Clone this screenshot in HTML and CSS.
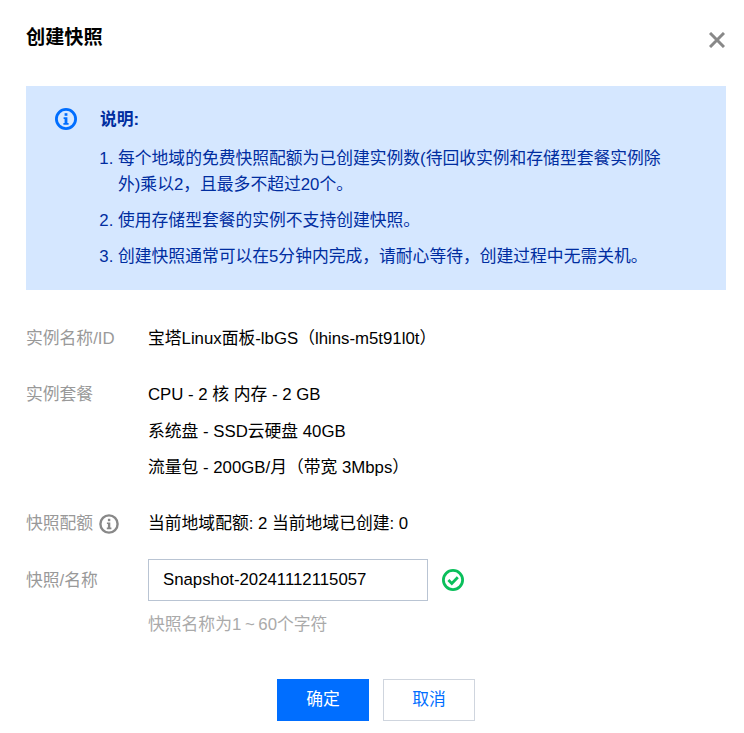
FILE: index.html
```html
<!DOCTYPE html>
<html lang="zh-CN">

<head>
    <meta charset="UTF-8">
    <meta name="viewport" content="width=device-width, initial-scale=1.0">
    <title>创建快照</title>
    <link rel="stylesheet" href="styles.css">
</head>

<body>
    <div class="dialog">
        <div class="header">
            <h3 class="title">创建快照</h3>
            <svg class="close" viewBox="0 0 16 16" width="16" height="16">
                <path d="M1 1L15 15M15 1L1 15" stroke="#888" stroke-width="3" fill="none" />
            </svg>
        </div>

        <div class="notice">
            <svg class="noticeIcon" viewBox="0 0 22 22" width="22" height="22">
                <circle cx="11" cy="11" r="9.6" stroke="#006eff" stroke-width="2.8" fill="none" />
                <rect x="9.6" y="5.2" width="2.8" height="2.6" fill="#006eff" />
                <path d="M8.6 9.2H12.4V15H13.6V16.8H8.4V15H9.6V11H8.6Z" fill="#006eff" />
            </svg>
            <div class="noticeBody">
                <div class="noticeTitle">说明:</div>
                <ol class="noticeList">
                    <li>每个地域的免费快照配额为已创建实例数(待回收实例和存储型套餐实例除外)乘以2，且最多不超过20个。</li>
                    <li>使用存储型套餐的实例不支持创建快照。</li>
                    <li>创建快照通常可以在5分钟内完成，请耐心等待，创建过程中无需关机。</li>
                </ol>
            </div>
        </div>

        <div class="form">
            <div class="row">
                <div class="label">实例名称/ID</div>
                <div class="value">宝塔Linux面板-lbGS（lhins-m5t91l0t）</div>
            </div>
            <div class="row">
                <div class="label">实例套餐</div>
                <div class="value stack">
                    <div>CPU - 2 核 内存 - 2 GB</div>
                    <div>系统盘 - SSD云硬盘 40GB</div>
                    <div>流量包 - 200GB/月（带宽 3Mbps）</div>
                </div>
            </div>
            <div class="row">
                <div class="label">快照配额
                    <svg class="helpIcon" viewBox="0 0 20 20" width="20" height="20">
                        <circle cx="10" cy="10" r="8.6" stroke="#888" stroke-width="2.4" fill="none" />
                        <rect x="8.9" y="4.8" width="2.4" height="2.4" fill="#888" />
                        <path d="M7.9 8.4H11.3V13.6H12.4V15.2H7.8V13.6H8.9V10H7.9Z" fill="#888" />
                    </svg>
                </div>
                <div class="value">当前地域配额: 2 当前地域已创建: 0</div>
            </div>
            <div class="row inputRow">
                <div class="label">快照/名称</div>
                <div class="field">
                    <div class="fieldLine">
                        <input class="input" type="text" value="Snapshot-20241112115057">
                        <svg class="okIcon" viewBox="0 0 22 22" width="22" height="22">
                            <circle cx="11" cy="11" r="9.6" stroke="#0abf5b" stroke-width="2.8" fill="none" />
                            <path d="M6.4 11L9.8 14.4L15.8 8.2" stroke="#0abf5b" stroke-width="2.8" fill="none" />
                        </svg>
                    </div>
                    <div class="hint">快照名称为1 ~ 60个字符</div>
                </div>
            </div>
        </div>

        <div class="footer">
            <button class="btn primary">确定</button>
            <button class="btn">取消</button>
        </div>
    </div>
</body>

</html>
```

FILE: styles.css
```css
body {
    margin: 0;
    background-color: #fff;
    font-family: "Liberation Sans", "Noto Sans CJK SC", sans-serif;
    font-size: 16.8px;
    line-height: 26px;
    color: #000;
}

.dialog {
    width: 700px;
    padding: 25px 18px 12px 26px;
}

.header {
    display: flex;
    justify-content: space-between;
    height: 61px;
}

.title {
    margin: 0;
    font-size: 19.2px;
    line-height: 26px;
    font-weight: bold;
}

.close {
    margin: 7px 1px 0 0;
}

.notice {
    display: flex;
    height: 204px;
    box-sizing: border-box;
    padding: 21px 20px 0 29px;
    background-color: #d5e7ff;
    color: #002da0;
}

.noticeIcon {
    flex: none;
    margin: 1px 23px 0 0;
}

.noticeBody {
    width: 575px;
}

.noticeTitle {
    font-weight: bold;
    margin-bottom: 13px;
}

.noticeList {
    margin: 0;
    padding: 0 0 0 18px;
}

.noticeList li {
    margin-bottom: 10px;
}

.form {
    margin-top: 36px;
    display: flex;
    flex-direction: column;
    gap: 30px;
}

.row {
    display: flex;
}

.inputRow {
    margin-top: -8px;
}

.label {
    flex: none;
    width: 122px;
    color: #999;
    display: flex;
    align-items: center;
    align-self: flex-start;
    gap: 6px;
    white-space: nowrap;
}

.inputRow .label {
    height: 44px;
}

.stack {
    display: flex;
    flex-direction: column;
    gap: 10.5px;
}

.fieldLine {
    display: flex;
    align-items: center;
    gap: 14px;
}

.input {
    width: 280px;
    height: 42px;
    box-sizing: border-box;
    padding: 0 14px;
    border: 1px solid #b9c4d3;
    border-radius: 0;
    outline: none;
    font: inherit;
    color: #000;
}

.hint {
    margin-top: 11px;
    color: #aaa;
    word-spacing: -1px;
}

.footer {
    margin-top: 41px;
    display: flex;
    justify-content: center;
    gap: 14px;
}

.btn {
    width: 92px;
    height: 42px;
    padding: 0;
    border: 1px solid #cfd5de;
    background-color: #fff;
    color: #006eff;
    font: inherit;
    cursor: pointer;
}

.primary {
    border-color: #006eff;
    background-color: #006eff;
    color: #fff;
}
```
